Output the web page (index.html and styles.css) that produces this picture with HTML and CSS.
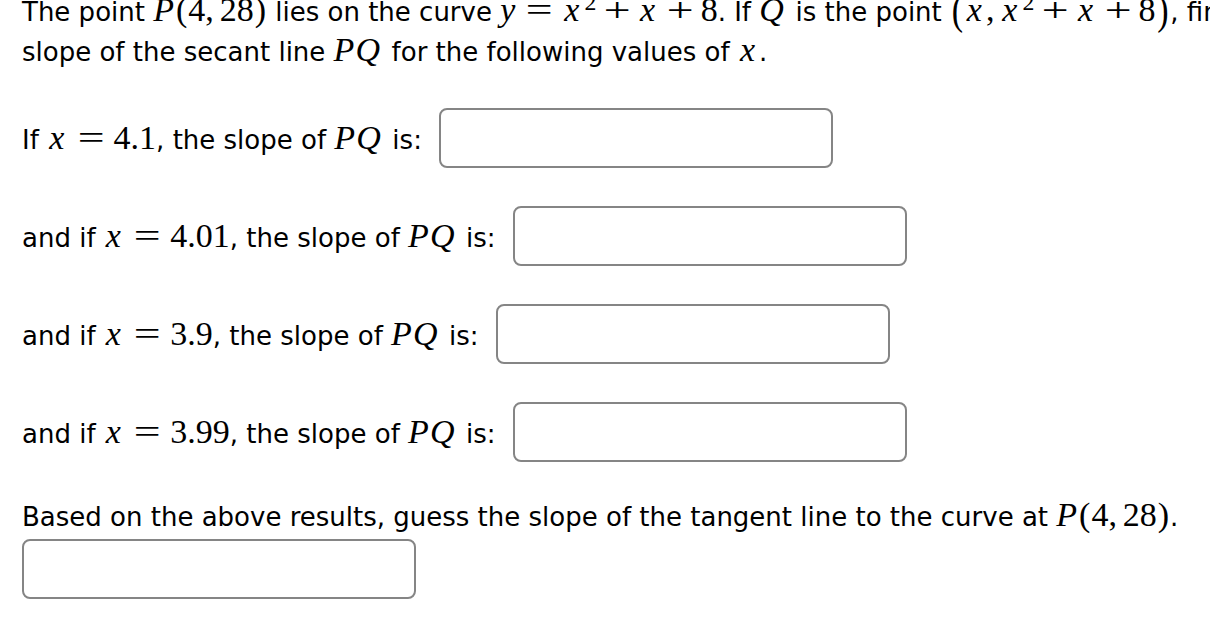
FILE: index.html
```html
<!DOCTYPE html>
<html>
<head>
<meta charset="utf-8">
<link rel="stylesheet" href="styles.css">
</head>
<body>
<div class="page">
  <p class="intro">The point <span class="m"><i class="vp">P</i><span class="pr">(</span>4,<span class="th"></span>28<span class="pr">)</span></span> lies on the curve <span class="m"><i class="vy">y</i><span class="rel">=</span><i class="vx">x</i><sup>2</sup><span class="bin">+</span><i class="vx">x</i><span class="bin">+</span>8</span>. If <span class="m"><i class="vq">Q</i></span> is the point <span class="m"><span class="big">(</span><i class="vx">x</i>,<span class="th"></span><i class="vx">x</i><sup>2</sup><span class="bin">+</span><i class="vx">x</i><span class="bin">+</span>8<span class="big">)</span></span>, find the<br>slope of the secant line <span class="m"><i class="vp">P</i><i class="vq">Q</i></span> for the following values of <span class="m"><i class="vx">x</i></span>.</p>

  <div class="rows">
    <div class="row"><span class="label">If <span class="m"><i class="vx">x</i><span class="rel">=</span>4.1</span>, the slope of <span class="m"><i class="vp">P</i><i class="vq">Q</i></span> is:</span><input class="ans" type="text"></div>
    <div class="row"><span class="label">and if <span class="m"><i class="vx">x</i><span class="rel">=</span>4.01</span>, the slope of <span class="m"><i class="vp">P</i><i class="vq">Q</i></span> is:</span><input class="ans" type="text"></div>
    <div class="row"><span class="label">and if <span class="m"><i class="vx">x</i><span class="rel">=</span>3.9</span>, the slope of <span class="m"><i class="vp">P</i><i class="vq">Q</i></span> is:</span><input class="ans" type="text"></div>
    <div class="row"><span class="label">and if <span class="m"><i class="vx">x</i><span class="rel">=</span>3.99</span>, the slope of <span class="m"><i class="vp">P</i><i class="vq">Q</i></span> is:</span><input class="ans" type="text"></div>
  </div>

  <p class="guess">Based on the above results, guess the slope of the tangent line to the curve at <span class="m"><i class="vp">P</i><span class="pr">(</span>4,<span class="th"></span>28<span class="pr">)</span></span>.</p>
  <input class="ans" type="text">
</div>
</body>
</html>
```

FILE: styles.css
```css
html, body {
  margin: 0;
  padding: 0;
  background: #fff;
  overflow: hidden;
}
body {
  font-family: "DejaVu Sans", sans-serif;
  font-size: 26px;
  color: #000;
}
.page {
  padding: 0 22px;
  white-space: nowrap;
}
.intro {
  margin: -8px 0 0;
  line-height: 40px;
}
.m {
  font-family: "Liberation Serif", serif;
  font-size: 34px;
  line-height: 1;
}
.m i {
  font-style: italic;
}
.vx {
  padding: 0 0.12em 0 0.06em;
}
.vy {
  padding-right: 0.05em;
}
.vp {
  padding-right: 0.03em;
}
.vq {
  padding-right: 0.1em;
}
.pr {
  padding: 0 0.03em;
}
.m sup {
  font-size: 0.7em;
  line-height: 0;
  vertical-align: 0.45em;
  margin-left: 1px;
}
.rel,
.bin {
  display: inline-block;
  width: 0.778em;
  text-align: center;
  transform: scale(1.4, 1);
}
.rel {
  margin: 0 0.278em;
}
.bin {
  margin: 0 0.222em;
}
.th {
  display: inline-block;
  width: 0.17em;
}
.big {
  display: inline-block;
  transform: scale(1, 1.25);
  padding: 0 0.05em;
}
.rows {
  margin-top: 36px;
  display: flex;
  flex-direction: column;
  gap: 38px;
}
.row {
  display: flex;
  align-items: center;
  gap: 17px;
}
.ans {
  box-sizing: border-box;
  width: 394px;
  height: 60px;
  border: 2px solid #858585;
  border-radius: 8px;
  background: #fff;
  margin: 0;
  padding: 0 8px;
  font: inherit;
  outline: none;
}
.guess {
  margin: 35px 0 2px;
  line-height: 40px;
}
```
